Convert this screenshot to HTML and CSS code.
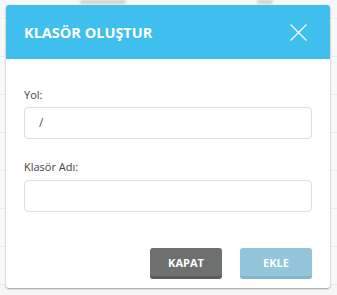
FILE: index.html
```html
<!DOCTYPE html>
<html lang="tr">
<head>
<meta charset="utf-8">
<title>Klasör Oluştur</title>
<link rel="stylesheet" href="styles.css">
</head>
<body>
<div class="page">
  <div class="row row-first"><span class="smudge s1"></span><span class="smudge s2"></span></div>
  <div class="row"></div>
  <div class="row"></div>
  <div class="row"></div>
  <div class="row"></div>
  <div class="row"></div>
  <div class="row"></div>
  <div class="row row-last"><span class="smudge s3"></span><span class="smudge s4"></span></div>
</div>

<div class="modal">
  <div class="modal-header">
    <h2 class="modal-title">KLASÖR OLUŞTUR</h2>
    <button class="close" type="button" aria-label="Kapat">
      <svg width="17" height="17" viewBox="0 0 17 17"><path d="M0.5 0.5 L16.5 16.5 M16.5 0.5 L0.5 16.5" stroke="#ffffff" stroke-width="1.2" fill="none"/></svg>
    </button>
  </div>
  <div class="modal-body">
    <label class="label">Yol:</label>
    <div class="input">/</div>
    <label class="label label-2">Klasör Adı:</label>
    <div class="input"></div>
  </div>
  <div class="modal-footer">
    <button class="btn btn-close" type="button">KAPAT</button>
    <button class="btn btn-add" type="button">EKLE</button>
  </div>
</div>
</body>
</html>
```
FILE: styles.css
```css
html, body {
  margin: 0;
  padding: 0;
}
body {
  width: 337px;
  height: 295px;
  overflow: hidden;
  background: #f6f6f6;
  font-family: "Open Sans", "DejaVu Sans", sans-serif;
  position: relative;
}
.page {
  display: flex;
  flex-direction: column;
}
.row {
  height: 37px;
  border-bottom: 1px solid #ebebeb;
  display: flex;
  align-items: center;
  background: #f8f8f8;
}
.row-first {
  height: 18px;
  align-items: flex-start;
}
.row-last {
  align-items: flex-end;
}
.smudge {
  display: block;
  height: 4px;
  background: #d2d2d2;
  border-radius: 2px;
  filter: blur(0.8px);
}
.s1 { margin-left: 80px; width: 46px; }
.s2 { margin-left: 131px; width: 16px; }
.s3 { margin-left: 80px; width: 20px; margin-bottom: 1px; }
.s4 { margin-left: 155px; width: 16px; margin-bottom: 1px; }

.modal {
  position: absolute;
  left: 6px;
  top: 5px;
  width: 324px;
  height: 283px;
  background: #ffffff;
  border-radius: 3px;
  box-shadow: 0 1px 2px rgba(0,0,0,0.35), 0 0 1px rgba(0,0,0,0.15);
  display: flex;
  flex-direction: column;
}
.modal-header {
  height: 54px;
  background: #3ebfee;
  border-radius: 3px 3px 0 0;
  display: flex;
  align-items: center;
  justify-content: space-between;
  padding: 0 23px 0 18px;
}
.modal-title {
  margin: 0;
  font-size: 14.5px;
  font-weight: 700;
  color: #ffffff;
}
.close {
  border: 0;
  padding: 0;
  background: transparent;
  display: flex;
  margin-top: 1px;
}
.modal-body {
  display: flex;
  flex-direction: column;
  padding: 28px 18px 0 18px;
}
.label {
  font-size: 11px;
  line-height: 15px;
  color: #444444;
  margin-bottom: 5px;
}
.label-2 {
  margin-top: 20px;
  margin-bottom: 6px;
}
.input {
  height: 30px;
  border: 1px solid #dedede;
  border-radius: 4px;
  padding: 0 14px;
  font-size: 12px;
  line-height: 30px;
  color: #555555;
}
.modal-footer {
  display: flex;
  justify-content: flex-end;
  gap: 18px;
  padding: 36px 18px 0 18px;
}
.btn {
  width: 72px;
  height: 31px;
  border: 0;
  border-radius: 3px;
  font-family: "Open Sans", "DejaVu Sans", sans-serif;
  font-size: 11px;
  font-weight: 700;
  color: #ffffff;
  padding: 0;
  box-sizing: border-box;
}
.btn-close {
  background: #6e706f;
  border-bottom: 3px solid #5a5c5b;
}
.btn-add {
  background: #93c6da;
  border-bottom: 3px solid #80b6cb;
}
```
